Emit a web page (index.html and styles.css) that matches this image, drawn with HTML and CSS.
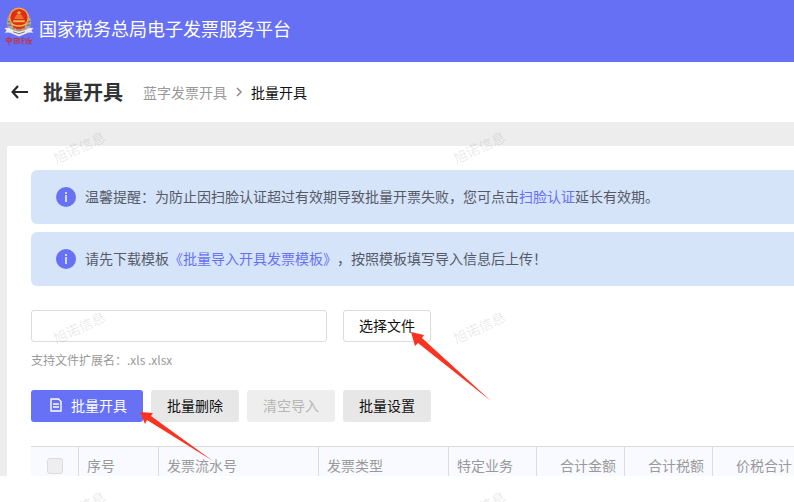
FILE: index.html
```html
<!DOCTYPE html>
<html lang="zh-CN">
<head>
<meta charset="utf-8">
<meta name="viewport" content="width=device-width, initial-scale=1">
<title>批量开具</title>
<link rel="stylesheet" href="styles.css">
</head>
<body>
<header class="topbar">
  <svg class="emblem" viewBox="0 0 32 44" aria-hidden="true">
    <path d="M6 8Q1 15 5 23L10 27H22L27 23Q31 15 26 8L23 5H9Z" fill="#aaa6a4"/>
    <path d="M5 11l3 1M4 15l4 1M4 19l4 0M27 11l-3 1M28 15l-4 1M28 19l-4 0" stroke="#66606c" stroke-width="1"/>
    <circle cx="16" cy="11" r="10.500" fill="#f3a73c"/>
    <circle cx="16" cy="11" r="9" fill="#df2b1d"/>
    <path d="M16 4l1 1.500h2l-2 1 1 2-2-1-2 1 1-2-2-1h2zM12 11h8l1 1H11zM13 9h6l1 1h-8zM10 14h12v2H10z" fill="#f4b83e"/>
    <path d="M9 18h14l-2 6H11z" fill="#d9321f"/>
    <path d="M8 18q8 4 16 0M11 23q5 2 10 0" fill="none" stroke="#f1bd45" stroke-width="1.500"/>
    <path d="M1 22q5-1 8 2l7 2 7-2q3-3 8-2l-2 3 2 2q-5-1-8 1l-7 3-7-3q-3-2-8-1l2-2z" fill="#eceaf2"/>
    <path d="M10 26l6 2 6-2M13 24h6" fill="none" stroke="#74717f" stroke-width="1"/>
    <path d="M3 33h5v3H3zM5.500 31v9M11 33h5v5h-5zM12 35h3M13.500 34v3M18 33l3-1M19.500 32v7M18 36l3-1M22 33l2 4-1 2M26 32l-1 3h4l-4 4M26 36l3 3" fill="none" stroke="#b93754" stroke-width="1.200"/>
  </svg>
  <span class="platform">国家税务总局电子发票服务平台</span>
</header>

<nav class="crumbs" aria-label="面包屑">
  <button class="back" type="button" aria-label="返回">
    <svg width="17" height="14" viewBox="0 0 17 14" fill="none" stroke="#262626" stroke-width="2.200" aria-hidden="true"><path d="M7 1L1.600 7L7 13M2 7h15"/></svg>
  </button>
  <h1 class="title">批量开具</h1>
  <a class="parent" href="#">蓝字发票开具</a>
  <svg class="chevron" width="8" height="10" viewBox="0 0 8 10" fill="none" stroke="#8c8c8c" stroke-width="1.500" aria-hidden="true"><path d="M2 1l4 4-4 4"/></svg>
  <span class="current">批量开具</span>
</nav>

<main class="page">
  <section class="panel">
    <div class="notice">
      <svg class="info" viewBox="0 0 20 20" aria-hidden="true"><circle cx="10" cy="10" r="10" fill="#6671f5"/><path d="M9 5h2v2H9zM9 8h2v7H9z" fill="#d0d8fb"/></svg>
      <p>温馨提醒：为防止因扫脸认证超过有效期导致批量开票失败，您可点击<a href="#">扫脸认证</a>延长有效期。</p>
    </div>
    <div class="notice">
      <svg class="info" viewBox="0 0 20 20" aria-hidden="true"><circle cx="10" cy="10" r="10" fill="#6671f5"/><path d="M9 5h2v2H9zM9 8h2v7H9z" fill="#d0d8fb"/></svg>
      <p>请先下载模板<a href="#">《批量导入开具发票模板》</a>，按照模板填写导入信息后上传！</p>
    </div>

    <div class="upload">
      <input class="file-name" type="text" aria-label="导入文件">
      <button class="btn outline" type="button">选择文件
        <svg class="pointer" width="81" height="70" viewBox="0 0 81 70" aria-hidden="true"><path d="M0 0L13 3 11 6 80 69 7 11 4 14Z" fill="#fa3220"/></svg>
      </button>
    </div>
    <p class="hint">支持文件扩展名：.xls .xlsx</p>

    <div class="actions">
      <button class="btn primary" type="button">
        <svg width="12" height="14" viewBox="0 0 12 14" fill="none" stroke="#fff" stroke-width="1.400" aria-hidden="true"><path d="M1 1h7.500L11 3.500V13H1zM3 6h6M3 9h6"/></svg>批量开具
        <svg class="pointer" width="74" height="51" viewBox="0 0 74 51" aria-hidden="true"><path d="M0 0L13 1 11 4 73 49 7 8 5 12Z" fill="#fa3220"/></svg>
      </button>
      <button class="btn" type="button">批量删除</button>
      <button class="btn" type="button" disabled>清空导入</button>
      <button class="btn" type="button">批量设置</button>
    </div>

    <div class="table-view">
      <table>
        <colgroup><col class="c-check"><col class="c-index"><col class="c-serial"><col class="c-type"><col class="c-amount"><col class="c-amount"><col class="c-amount"><col class="c-amount"></colgroup>
        <thead>
          <tr>
            <th class="check"><input type="checkbox" aria-label="全选" disabled></th>
            <th>序号</th><th>发票流水号</th><th>发票类型</th><th>特定业务</th>
            <th class="num">合计金额</th><th class="num">合计税额</th><th class="num">价税合计</th>
          </tr>
        </thead>
      </table>
    </div>
  </section>
</main>

<div class="watermarks" aria-hidden="true">
  <span>旭诺信息</span><span>旭诺信息</span>
  <span>旭诺信息</span><span>旭诺信息</span>
  <span>旭诺信息</span><span>旭诺信息</span>
</div>
</body>
</html>
```
FILE: styles.css
```css
* { box-sizing: border-box; }

body {
  margin: 0;
  position: relative;
  height: 100vh;
  overflow: hidden;
  background: #fff;
  color: #555a66;
  font: 14px/20px "Noto Sans CJK SC", sans-serif;
  text-spacing-trim: space-all;
}

p, h1 { margin: 0; }
a { color: #6671f5; text-decoration: none; }
button, input { font: inherit; }

.topbar {
  display: flex;
  align-items: center;
  gap: 4px;
  height: 62px;
  padding: 0 3px 6px;
  background: #6670f4;
  color: #fff;
}
.emblem { width: 32px; height: 42px; }
.platform { font-size: 18px; line-height: 24px; }

.crumbs {
  display: flex;
  align-items: center;
  height: 60px;
  padding: 0 11px;
  background: #fff;
}
.back {
  display: flex;
  padding: 0;
  border: 0;
  background: none;
}
.title {
  margin: 0 20px 0 15px;
  color: #303133;
  font-size: 20px;
  line-height: 28px;
}
.parent { color: #999; }
.chevron { margin: 0 8px; }
.current { color: #111; }

.page { padding: 24px 0 0 7px; background: #ededed; }
.panel {
  padding: 24px 0 0 24px;
  border-top-left-radius: 2px;
  background: #fff;
}

.notice {
  display: flex;
  align-items: center;
  gap: 9px;
  height: 54px;
  margin-bottom: 8px;
  padding-left: 25px;
  border-radius: 6px 0 0 6px;
  background: #d6e4fa;
  white-space: nowrap;
}
.notice p { padding-bottom: 2px; }
.info { width: 20px; height: 20px; }

.upload { display: flex; gap: 16px; margin-top: 24px; }
.file-name {
  width: 296px;
  height: 32px;
  padding: 0 8px;
  border: 1px solid #dcdcdc;
  border-radius: 3px;
  background: #fff;
}

.btn {
  position: relative;
  display: flex;
  align-items: center;
  gap: 9px;
  height: 32px;
  padding: 0 16px 2px;
  border: 0;
  border-radius: 3px;
  background: #e7e7e7;
  color: #111;
}
.btn:disabled { background: #eee; color: #b5b5b5; }
.btn.outline { padding: 0 15px 2px; border: 1px solid #dcdcdc; background: #fff; }
.btn.primary { padding-left: 19px; background: #6671f5; color: #fff; }

/* Arrow whose tip lies on the corner of its button */
.pointer { position: absolute; z-index: 2; pointer-events: none; }
.outline .pointer { left: 67px; top: 21px; }
.primary .pointer { left: 109px; top: 22px; }

.hint { margin-top: 8px; color: #999; font-size: 12px; }
.actions { display: flex; gap: 8px; margin-top: 20px; }

.table-view { height: 30px; margin-top: 24px; overflow: hidden; }
table {
  width: 100%;
  min-width: 770px;
  border-collapse: separate;
  border-spacing: 0;
  table-layout: fixed;
}
.c-check { width: 48px; }
.c-index { width: 80px; }
.c-serial { width: 160px; }
.c-type { width: 130px; }
.c-amount { width: 88px; }
th {
  height: 38px;
  padding: 0 8px 2px;
  border-top: 1px solid #dcdcdc;
  border-right: 1px solid #dcdcdc;
  background: #f9faff;
  color: #999;
  font-weight: 400;
  text-align: left;
  white-space: nowrap;
}
.num { text-align: right; }
.check { padding: 0; }
.check input {
  appearance: none;
  display: block;
  width: 16px;
  height: 16px;
  margin: 0 auto;
  border: 1px solid #dcdcdc;
  border-radius: 3px;
  background: #eee;
}

.watermarks {
  position: absolute;
  inset: 57px 0 0 0;
  z-index: 3;
  display: grid;
  grid-template-columns: 400px 400px;
  grid-auto-rows: 180px;
  overflow: hidden;
  pointer-events: none;
}
.watermarks span {
  align-self: center;
  justify-self: start;
  margin-left: 51px;
  color: rgba(0, 0, 0, 0.1);
  transform: rotate(-25deg);
}
```
